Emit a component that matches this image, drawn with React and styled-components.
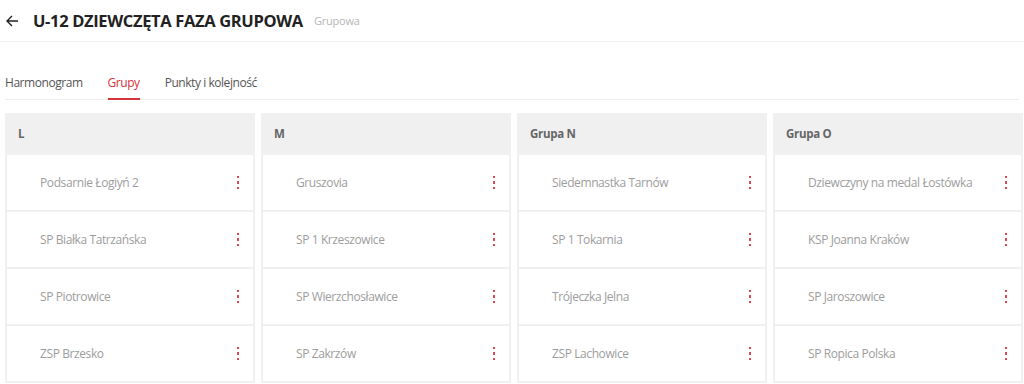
import React from "react";
import styled, { createGlobalStyle } from "styled-components";

const Global = createGlobalStyle`
  html, body { margin: 0; padding: 0; background: #fff; }
  body { font-family: "Open Sans", "Noto Sans", sans-serif; overflow: hidden; }
`;

const Page = styled.div`
  width: 1024px;
  height: 384px;
  overflow: hidden;
`;

const TopBar = styled.div`
  display: flex;
  align-items: center;
  height: 42px;
  padding-left: 6px;
  border-bottom: 1px solid #f0f0f0;
  box-sizing: border-box;
`;

const Back = styled.button`
  border: 0;
  background: none;
  padding: 0;
  margin: 0 14px 0 0;
  display: flex;
  align-items: center;
  cursor: pointer;
`;

const Title = styled.h1`
  margin: 0;
  font-size: 16.5px;
  font-weight: 700;
  color: #222;
  letter-spacing: -0.35px;
`;

const Sub = styled.span`
  margin-left: 11px;
  font-size: 11px;
  color: #b5b5b5;
  letter-spacing: -0.2px;
`;

const Tabs = styled.div`
  display: flex;
  margin: 33px 5px 0 5px;
  border-bottom: 1px solid #eeeeee;
  gap: 25px;
`;

const Tab = styled.div`
  font-size: 12px;
  letter-spacing: -0.45px;
  color: ${(p) => (p.$active ? "#d4343b" : "#555")};
  padding-bottom: 7px;
  border-bottom: 2px solid ${(p) => (p.$active ? "#d4343b" : "transparent")};
  margin-bottom: -1px;
  line-height: 16px;
`;

const Grid = styled.div`
  display: grid;
  grid-template-columns: repeat(4, 250px);
  gap: 6px;
  padding: 13px 0 0 5px;
`;

const Card = styled.div`
  background: #f0f0f0;
  padding: 0 2px 2px 2px;
  display: flex;
  flex-direction: column;
  gap: 2px;
`;

const CardHead = styled.div`
  height: 40px;
  display: flex;
  align-items: center;
  padding-left: 11px;
  font-size: 11.5px;
  letter-spacing: -0.3px;
  font-weight: 700;
  color: #666;
`;

const Row = styled.div`
  background: #fff;
  height: 55px;
  display: flex;
  align-items: center;
  justify-content: space-between;
  padding: 0 14px 0 33px;
  font-size: 12px;
  letter-spacing: -0.4px;
  color: #9d9d9d;
`;

const Dots = styled.span`
  display: flex;
  flex-direction: column;
  gap: 3px;
  i {
    width: 2px;
    height: 2.5px;
    background: #e0454b;
    display: block;
  }
`;

const groups = [
  { name: "L", teams: ["Podsarnie Łogiyń 2", "SP Białka Tatrzańska", "SP Piotrowice", "ZSP Brzesko"] },
  { name: "M", teams: ["Gruszovia", "SP 1 Krzeszowice", "SP Wierzchosławice", "SP Zakrzów"] },
  { name: "Grupa N", teams: ["Siedemnastka Tarnów", "SP 1 Tokarnia", "Trójeczka Jelna", "ZSP Lachowice"] },
  { name: "Grupa O", teams: ["Dziewczyny na medal Łostówka", "KSP Joanna Kraków", "SP Jaroszowice", "SP Ropica Polska"] },
];

export default function App() {
  return (
    <Page>
      <Global />
      <TopBar>
        <Back aria-label="wstecz">
          <svg width="13" height="12" viewBox="0 0 13 12" fill="none" stroke="#222" strokeWidth="1.4">
            <path d="M12 6H1.5M6 1L1 6l5 5" />
          </svg>
        </Back>
        <Title>U-12 DZIEWCZĘTA FAZA GRUPOWA</Title>
        <Sub>Grupowa</Sub>
      </TopBar>
      <Tabs>
        <Tab>Harmonogram</Tab>
        <Tab $active>Grupy</Tab>
        <Tab>Punkty i kolejność</Tab>
      </Tabs>
      <Grid>
        {groups.map((g) => (
          <Card key={g.name}>
            <CardHead>{g.name}</CardHead>
            {g.teams.map((t) => (
              <Row key={t}>
                {t}
                <Dots><i /><i /><i /></Dots>
              </Row>
            ))}
          </Card>
        ))}
      </Grid>
    </Page>
  );
}
